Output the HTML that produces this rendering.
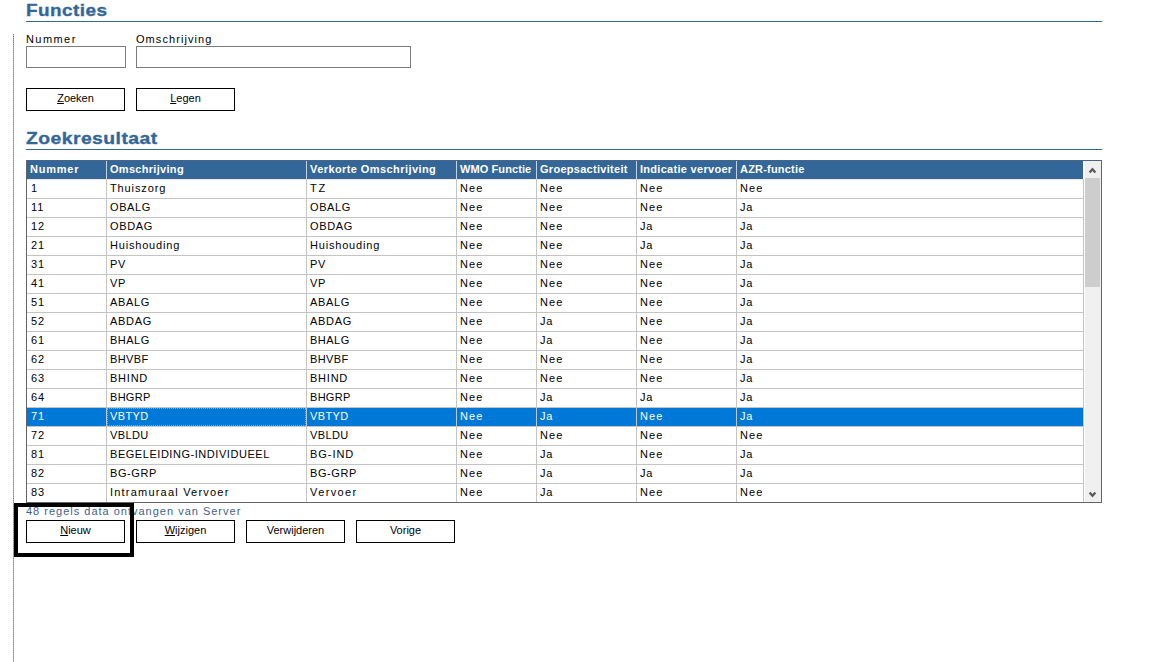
<!DOCTYPE html><html><head><meta charset="utf-8"><style>
*{margin:0;padding:0;box-sizing:border-box}
html,body{width:1155px;height:662px;overflow:hidden;background:#fff}
body{position:relative;font-family:"Liberation Sans",sans-serif;color:#000}
.vl{position:absolute;left:13px;top:34px;width:1px;height:628px;background:repeating-linear-gradient(to bottom,#9b7fa2 0 1px,#a6b8a6 1px 2px)}
.ttl{position:absolute;left:26px;font-weight:bold;font-size:17px;color:#336699;letter-spacing:0.4px;line-height:20px;-webkit-text-stroke:0.35px #336699;transform-origin:0 0;white-space:nowrap}
.ul{position:absolute;left:26px;width:1076px;height:1px;background:#336699}
.lbl{position:absolute;font-size:11px;line-height:14px;white-space:nowrap}
.inp{position:absolute;border:1px solid #7a7a7a;background:#fff}
.btn{position:absolute;border:1px solid #000;background:#fff;font-size:11px;text-align:center;line-height:19px;white-space:nowrap}
.tbl{position:absolute;left:26px;top:160px;width:1076px;height:343px;border:1px solid #646464;border-top-color:#466687;overflow:hidden;background:#fff}
.hd{position:absolute;left:0;top:0;width:1056px;height:18px;background:#336699}
.hc{position:absolute;top:0;height:18px;color:#fff;font-weight:bold;font-size:11px;line-height:16px;padding-left:3px;white-space:nowrap;overflow:hidden}
.hl{position:absolute;top:0;width:1px;height:18px;background:#c8d2dc}
.cl{position:absolute;width:1px;background:#c4c4c4}
.rl{position:absolute;left:0;width:1056px;height:1px;background:#c4c4c4}
.c{position:absolute;height:18px;font-size:11px;line-height:18px;padding-left:3px;white-space:nowrap;overflow:hidden}
.sel{position:absolute;left:0;width:1056px;height:18px;background:#0078d7}
.selc{color:#fff}
.foc{position:absolute;border:1px dotted #ff8c1e}
.sb{position:absolute;left:1057px;top:0;width:17px;height:341px;background:#f0f0f0;border-left:1px solid #fff}
.thumb{position:absolute;left:0;top:17px;width:15px;height:109px;background:#cdcdcd}
.status{position:absolute;left:26px;top:504px;font-size:11px;line-height:14px;color:#42628a;white-space:nowrap}
.focus{position:absolute;left:14px;top:503px;width:120px;height:54px;border:4px solid #000}
</style></head><body>
<div class="vl"></div><div class="vl" style="height:11px;background:repeating-linear-gradient(to bottom,#7e7e7e 0 1px,#a8b0a8 1px 2px)"></div>
<div class="ttl" style="top:1px;transform:scaleX(1.114)">Functies</div>
<div class="ul" style="top:21px"></div>
<div class="lbl" style="left:26px;top:32px;letter-spacing:1.426px">Nummer</div>
<div class="lbl" style="left:136px;top:32px;letter-spacing:1.066px">Omschrijving</div>
<div class="inp" style="left:26px;top:46px;width:100px;height:22px"></div>
<div class="inp" style="left:136px;top:46px;width:275px;height:22px"></div>
<div class="btn" style="left:26px;top:88px;width:99px;height:23px"><u>Z</u>oeken</div>
<div class="btn" style="left:136px;top:88px;width:99px;height:23px"><u>L</u>egen</div>
<div class="ttl" style="top:129px;transform:scaleX(1.137)">Zoekresultaat</div>
<div class="ul" style="top:149px"></div>
<div class="tbl">
<div class="hd"></div><div class="rl" style="top:18px;background:#ede7e0"></div>
<div class="hc" style="left:0px;width:79px;letter-spacing:0.775px">Nummer</div>
<div class="hc" style="left:80px;width:199px;letter-spacing:0.3px">Omschrijving</div>
<div class="hl" style="left:79px"></div>
<div class="hc" style="left:280px;width:149px;letter-spacing:0.42px">Verkorte Omschrijving</div>
<div class="hl" style="left:279px"></div>
<div class="hc" style="left:430px;width:79px;letter-spacing:0.092px">WMO Functie</div>
<div class="hl" style="left:429px"></div>
<div class="hc" style="left:510px;width:99px;letter-spacing:0.284px">Groepsactiviteit</div>
<div class="hl" style="left:509px"></div>
<div class="hc" style="left:610px;width:99px;letter-spacing:0.291px">Indicatie vervoer</div>
<div class="hl" style="left:609px"></div>
<div class="hc" style="left:710px;width:346px;letter-spacing:0.197px">AZR-functie</div>
<div class="hl" style="left:709px"></div>
<div class="rl" style="top:37px"></div>
<div class="rl" style="top:56px"></div>
<div class="rl" style="top:75px"></div>
<div class="rl" style="top:94px"></div>
<div class="rl" style="top:113px"></div>
<div class="rl" style="top:132px"></div>
<div class="rl" style="top:151px"></div>
<div class="rl" style="top:170px"></div>
<div class="rl" style="top:189px"></div>
<div class="rl" style="top:208px"></div>
<div class="rl" style="top:227px"></div>
<div class="rl" style="top:246px"></div>
<div class="sel" style="top:247px"></div>
<div class="rl" style="top:265px"></div>
<div class="rl" style="top:284px"></div>
<div class="rl" style="top:303px"></div>
<div class="rl" style="top:322px"></div>
<div class="rl" style="top:341px"></div>
<div class="cl" style="left:79px;top:18px;height:323px"></div>
<div class="cl" style="left:279px;top:18px;height:323px"></div>
<div class="cl" style="left:429px;top:18px;height:323px"></div>
<div class="cl" style="left:509px;top:18px;height:323px"></div>
<div class="cl" style="left:609px;top:18px;height:323px"></div>
<div class="cl" style="left:709px;top:18px;height:323px"></div>
<div class="cl" style="left:1056px;top:18px;height:323px"></div>
<div class="c" style="left:0px;top:18px;width:79px;letter-spacing:0px;padding-left:4px">1</div>
<div class="c" style="left:80px;top:18px;width:199px;letter-spacing:0.875px">Thuiszorg</div>
<div class="c" style="left:280px;top:18px;width:149px;letter-spacing:1.847px">TZ</div>
<div class="c" style="left:430px;top:18px;width:79px;letter-spacing:1.056px">Nee</div>
<div class="c" style="left:510px;top:18px;width:99px;letter-spacing:1.056px">Nee</div>
<div class="c" style="left:610px;top:18px;width:99px;letter-spacing:1.056px">Nee</div>
<div class="c" style="left:710px;top:18px;width:346px;letter-spacing:1.056px">Nee</div>
<div class="c" style="left:0px;top:37px;width:79px;letter-spacing:1.0px;padding-left:4px">11</div>
<div class="c" style="left:80px;top:37px;width:199px;letter-spacing:0.598px">OBALG</div>
<div class="c" style="left:280px;top:37px;width:149px;letter-spacing:0.598px">OBALG</div>
<div class="c" style="left:430px;top:37px;width:79px;letter-spacing:1.056px">Nee</div>
<div class="c" style="left:510px;top:37px;width:99px;letter-spacing:1.056px">Nee</div>
<div class="c" style="left:610px;top:37px;width:99px;letter-spacing:1.056px">Nee</div>
<div class="c" style="left:710px;top:37px;width:346px;letter-spacing:0.675px">Ja</div>
<div class="c" style="left:0px;top:56px;width:79px;letter-spacing:1.0px;padding-left:4px">12</div>
<div class="c" style="left:80px;top:56px;width:199px;letter-spacing:0.641px">OBDAG</div>
<div class="c" style="left:280px;top:56px;width:149px;letter-spacing:0.641px">OBDAG</div>
<div class="c" style="left:430px;top:56px;width:79px;letter-spacing:1.056px">Nee</div>
<div class="c" style="left:510px;top:56px;width:99px;letter-spacing:1.056px">Nee</div>
<div class="c" style="left:610px;top:56px;width:99px;letter-spacing:0.675px">Ja</div>
<div class="c" style="left:710px;top:56px;width:346px;letter-spacing:0.675px">Ja</div>
<div class="c" style="left:0px;top:75px;width:79px;letter-spacing:1.0px;padding-left:4px">21</div>
<div class="c" style="left:80px;top:75px;width:199px;letter-spacing:0.814px">Huishouding</div>
<div class="c" style="left:280px;top:75px;width:149px;letter-spacing:0.814px">Huishouding</div>
<div class="c" style="left:430px;top:75px;width:79px;letter-spacing:1.056px">Nee</div>
<div class="c" style="left:510px;top:75px;width:99px;letter-spacing:1.056px">Nee</div>
<div class="c" style="left:610px;top:75px;width:99px;letter-spacing:0.675px">Ja</div>
<div class="c" style="left:710px;top:75px;width:346px;letter-spacing:0.675px">Ja</div>
<div class="c" style="left:0px;top:94px;width:79px;letter-spacing:1.0px;padding-left:4px">31</div>
<div class="c" style="left:80px;top:94px;width:199px;letter-spacing:0.613px">PV</div>
<div class="c" style="left:280px;top:94px;width:149px;letter-spacing:0.613px">PV</div>
<div class="c" style="left:430px;top:94px;width:79px;letter-spacing:1.056px">Nee</div>
<div class="c" style="left:510px;top:94px;width:99px;letter-spacing:1.056px">Nee</div>
<div class="c" style="left:610px;top:94px;width:99px;letter-spacing:1.056px">Nee</div>
<div class="c" style="left:710px;top:94px;width:346px;letter-spacing:0.675px">Ja</div>
<div class="c" style="left:0px;top:113px;width:79px;letter-spacing:1.0px;padding-left:4px">41</div>
<div class="c" style="left:80px;top:113px;width:199px;letter-spacing:0.613px">VP</div>
<div class="c" style="left:280px;top:113px;width:149px;letter-spacing:0.613px">VP</div>
<div class="c" style="left:430px;top:113px;width:79px;letter-spacing:1.056px">Nee</div>
<div class="c" style="left:510px;top:113px;width:99px;letter-spacing:1.056px">Nee</div>
<div class="c" style="left:610px;top:113px;width:99px;letter-spacing:1.056px">Nee</div>
<div class="c" style="left:710px;top:113px;width:346px;letter-spacing:0.675px">Ja</div>
<div class="c" style="left:0px;top:132px;width:79px;letter-spacing:1.0px;padding-left:4px">51</div>
<div class="c" style="left:80px;top:132px;width:199px;letter-spacing:0.653px">ABALG</div>
<div class="c" style="left:280px;top:132px;width:149px;letter-spacing:0.653px">ABALG</div>
<div class="c" style="left:430px;top:132px;width:79px;letter-spacing:1.056px">Nee</div>
<div class="c" style="left:510px;top:132px;width:99px;letter-spacing:1.056px">Nee</div>
<div class="c" style="left:610px;top:132px;width:99px;letter-spacing:1.056px">Nee</div>
<div class="c" style="left:710px;top:132px;width:346px;letter-spacing:0.675px">Ja</div>
<div class="c" style="left:0px;top:151px;width:79px;letter-spacing:1.0px;padding-left:4px">52</div>
<div class="c" style="left:80px;top:151px;width:199px;letter-spacing:0.696px">ABDAG</div>
<div class="c" style="left:280px;top:151px;width:149px;letter-spacing:0.696px">ABDAG</div>
<div class="c" style="left:430px;top:151px;width:79px;letter-spacing:1.056px">Nee</div>
<div class="c" style="left:510px;top:151px;width:99px;letter-spacing:0.675px">Ja</div>
<div class="c" style="left:610px;top:151px;width:99px;letter-spacing:1.056px">Nee</div>
<div class="c" style="left:710px;top:151px;width:346px;letter-spacing:0.675px">Ja</div>
<div class="c" style="left:0px;top:170px;width:79px;letter-spacing:1.0px;padding-left:4px">61</div>
<div class="c" style="left:80px;top:170px;width:199px;letter-spacing:0.501px">BHALG</div>
<div class="c" style="left:280px;top:170px;width:149px;letter-spacing:0.501px">BHALG</div>
<div class="c" style="left:430px;top:170px;width:79px;letter-spacing:1.056px">Nee</div>
<div class="c" style="left:510px;top:170px;width:99px;letter-spacing:0.675px">Ja</div>
<div class="c" style="left:610px;top:170px;width:99px;letter-spacing:1.056px">Nee</div>
<div class="c" style="left:710px;top:170px;width:346px;letter-spacing:0.675px">Ja</div>
<div class="c" style="left:0px;top:189px;width:79px;letter-spacing:1.0px;padding-left:4px">62</div>
<div class="c" style="left:80px;top:189px;width:199px;letter-spacing:0.403px">BHVBF</div>
<div class="c" style="left:280px;top:189px;width:149px;letter-spacing:0.403px">BHVBF</div>
<div class="c" style="left:430px;top:189px;width:79px;letter-spacing:1.056px">Nee</div>
<div class="c" style="left:510px;top:189px;width:99px;letter-spacing:1.056px">Nee</div>
<div class="c" style="left:610px;top:189px;width:99px;letter-spacing:1.056px">Nee</div>
<div class="c" style="left:710px;top:189px;width:346px;letter-spacing:0.675px">Ja</div>
<div class="c" style="left:0px;top:208px;width:79px;letter-spacing:1.0px;padding-left:4px">63</div>
<div class="c" style="left:80px;top:208px;width:199px;letter-spacing:0.766px">BHIND</div>
<div class="c" style="left:280px;top:208px;width:149px;letter-spacing:0.766px">BHIND</div>
<div class="c" style="left:430px;top:208px;width:79px;letter-spacing:1.056px">Nee</div>
<div class="c" style="left:510px;top:208px;width:99px;letter-spacing:1.056px">Nee</div>
<div class="c" style="left:610px;top:208px;width:99px;letter-spacing:1.056px">Nee</div>
<div class="c" style="left:710px;top:208px;width:346px;letter-spacing:0.675px">Ja</div>
<div class="c" style="left:0px;top:227px;width:79px;letter-spacing:1.0px;padding-left:4px">64</div>
<div class="c" style="left:80px;top:227px;width:199px;letter-spacing:0.294px">BHGRP</div>
<div class="c" style="left:280px;top:227px;width:149px;letter-spacing:0.294px">BHGRP</div>
<div class="c" style="left:430px;top:227px;width:79px;letter-spacing:1.056px">Nee</div>
<div class="c" style="left:510px;top:227px;width:99px;letter-spacing:0.675px">Ja</div>
<div class="c" style="left:610px;top:227px;width:99px;letter-spacing:0.675px">Ja</div>
<div class="c" style="left:710px;top:227px;width:346px;letter-spacing:0.675px">Ja</div>
<div class="c selc" style="left:0px;top:246px;width:79px;letter-spacing:1.0px;padding-left:4px">71</div>
<div class="c selc" style="left:80px;top:246px;width:199px;letter-spacing:0.403px">VBTYD</div>
<div class="c selc" style="left:280px;top:246px;width:149px;letter-spacing:0.403px">VBTYD</div>
<div class="c selc" style="left:430px;top:246px;width:79px;letter-spacing:1.056px">Nee</div>
<div class="c selc" style="left:510px;top:246px;width:99px;letter-spacing:0.675px">Ja</div>
<div class="c selc" style="left:610px;top:246px;width:99px;letter-spacing:1.056px">Nee</div>
<div class="c selc" style="left:710px;top:246px;width:346px;letter-spacing:0.675px">Ja</div>
<div class="foc" style="left:80px;top:247px;width:199px;height:18px"></div>
<div class="c" style="left:0px;top:265px;width:79px;letter-spacing:1.0px;padding-left:4px">72</div>
<div class="c" style="left:80px;top:265px;width:199px;letter-spacing:0.403px">VBLDU</div>
<div class="c" style="left:280px;top:265px;width:149px;letter-spacing:0.403px">VBLDU</div>
<div class="c" style="left:430px;top:265px;width:79px;letter-spacing:1.056px">Nee</div>
<div class="c" style="left:510px;top:265px;width:99px;letter-spacing:1.056px">Nee</div>
<div class="c" style="left:610px;top:265px;width:99px;letter-spacing:1.056px">Nee</div>
<div class="c" style="left:710px;top:265px;width:346px;letter-spacing:1.056px">Nee</div>
<div class="c" style="left:0px;top:284px;width:79px;letter-spacing:1.0px;padding-left:4px">81</div>
<div class="c" style="left:80px;top:284px;width:199px;letter-spacing:0.544px">BEGELEIDING-INDIVIDUEEL</div>
<div class="c" style="left:280px;top:284px;width:149px;letter-spacing:0.96px">BG-IND</div>
<div class="c" style="left:430px;top:284px;width:79px;letter-spacing:1.056px">Nee</div>
<div class="c" style="left:510px;top:284px;width:99px;letter-spacing:0.675px">Ja</div>
<div class="c" style="left:610px;top:284px;width:99px;letter-spacing:1.056px">Nee</div>
<div class="c" style="left:710px;top:284px;width:346px;letter-spacing:0.675px">Ja</div>
<div class="c" style="left:0px;top:303px;width:79px;letter-spacing:1.0px;padding-left:4px">82</div>
<div class="c" style="left:80px;top:303px;width:199px;letter-spacing:0.579px">BG-GRP</div>
<div class="c" style="left:280px;top:303px;width:149px;letter-spacing:0.579px">BG-GRP</div>
<div class="c" style="left:430px;top:303px;width:79px;letter-spacing:1.056px">Nee</div>
<div class="c" style="left:510px;top:303px;width:99px;letter-spacing:0.675px">Ja</div>
<div class="c" style="left:610px;top:303px;width:99px;letter-spacing:0.675px">Ja</div>
<div class="c" style="left:710px;top:303px;width:346px;letter-spacing:0.675px">Ja</div>
<div class="c" style="left:0px;top:322px;width:79px;letter-spacing:1.0px;padding-left:4px">83</div>
<div class="c" style="left:80px;top:322px;width:199px;letter-spacing:1.205px">Intramuraal Vervoer</div>
<div class="c" style="left:280px;top:322px;width:149px;letter-spacing:1.396px">Vervoer</div>
<div class="c" style="left:430px;top:322px;width:79px;letter-spacing:1.056px">Nee</div>
<div class="c" style="left:510px;top:322px;width:99px;letter-spacing:0.675px">Ja</div>
<div class="c" style="left:610px;top:322px;width:99px;letter-spacing:1.056px">Nee</div>
<div class="c" style="left:710px;top:322px;width:346px;letter-spacing:1.056px">Nee</div>
<div class="sb"><div class="thumb"></div>
<svg style="position:absolute;left:0;top:0" width="17" height="17"><path d="M4.6 11.6 L7.5 8.3 L10.4 11.6" fill="none" stroke="#5a5a5a" stroke-width="2.3"/></svg>
<svg style="position:absolute;left:0;top:324px" width="17" height="17"><path d="M4.6 7.4 L7.5 10.7 L10.4 7.4" fill="none" stroke="#5a5a5a" stroke-width="2.3"/></svg>
</div>
</div>
<div class="status" style="letter-spacing:0.997px">48 regels data ontvangen van Server</div>
<div class="btn" style="left:26px;top:520px;width:99px;height:23px"><u>N</u>ieuw</div>
<div class="btn" style="left:136px;top:520px;width:99px;height:23px"><u>W</u>ijzigen</div>
<div class="btn" style="left:246px;top:520px;width:99px;height:23px">Verwijderen</div>
<div class="btn" style="left:356px;top:520px;width:99px;height:23px">Vorige</div>
<div class="focus"></div>
</body></html>
